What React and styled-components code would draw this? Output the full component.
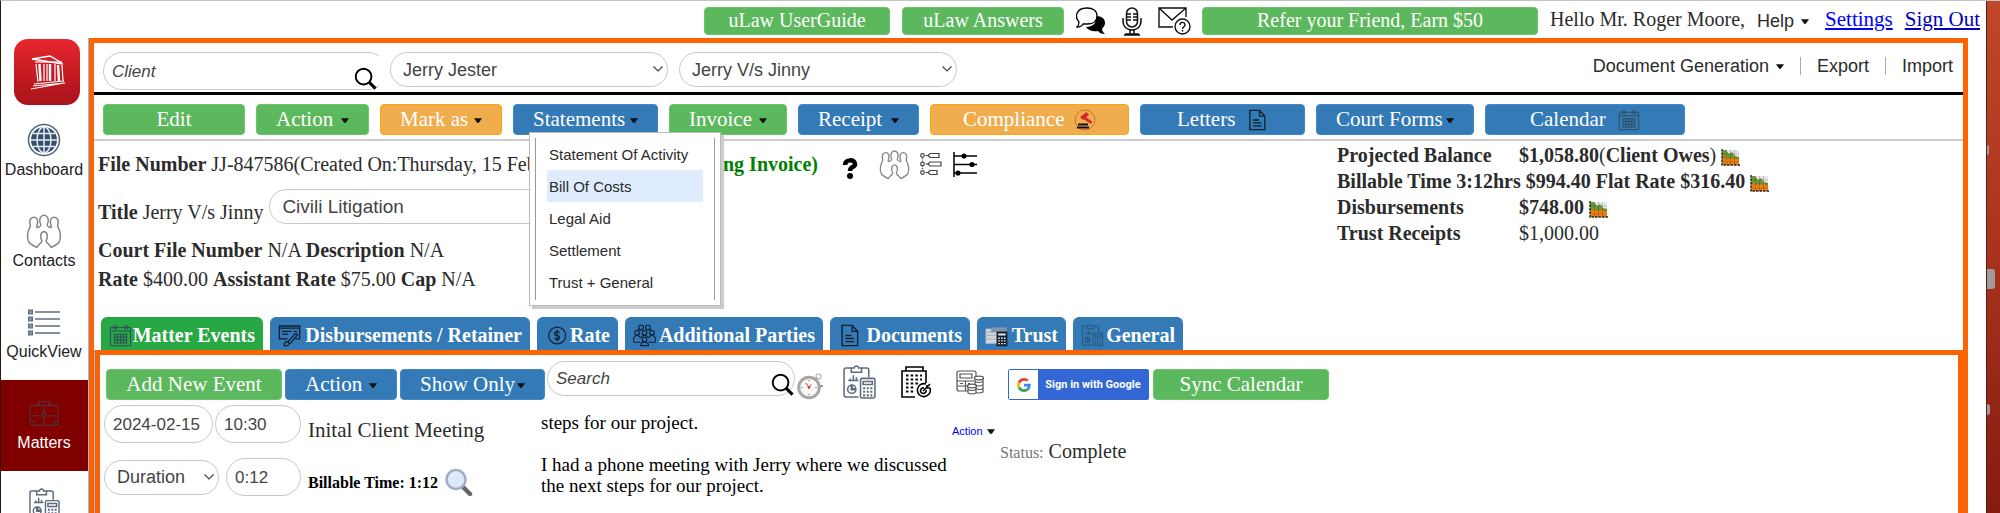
import React from 'react';
import styled, { createGlobalStyle, css } from 'styled-components';

const serif = "'Liberation Serif', 'Times New Roman', serif";
const sans = "'Liberation Sans', Arial, sans-serif";
const orange = '#ff6200';

const tones = {
    green: { bg: '#5cb85c', edge: '#6cc56c' },
    blue: { bg: '#337ab7', edge: '#4189c9' },
    amber: { bg: '#f0ad4e', edge: '#ffa50c' },
};

const sideItems = [
    { id: 'dashboard', label: 'Dashboard', icon: 'globe', size: 34 },
    { id: 'contacts', label: 'Contacts', icon: 'people', size: 36 },
    { id: 'quickview', label: 'QuickView', icon: 'list', size: 34 },
    { id: 'matters', label: 'Matters', icon: 'briefcase', size: 32, active: true },
    { id: 'accounts', icon: 'report', size: 33 },
];

const tabs = [
    { label: 'Matter Events', icon: 'calendar', width: 162, active: true },
    { label: 'Disbursements / Retainer', icon: 'cheque', width: 260 },
    { label: 'Rate', icon: 'dollar', width: 81 },
    { label: 'Additional Parties', icon: 'crowd', width: 198 },
    { label: 'Documents', icon: 'document', width: 140 },
    { label: 'Trust', icon: 'trust', width: 89 },
    { label: 'General', icon: 'reportDark', width: 110 },
];

const statements = ['Statement Of Activity', 'Bill Of Costs', 'Legal Aid', 'Settlement', 'Trust + General'];


export default function App() {
  return (
    <>
      <GlobalStyle />
      <Page>
        <Sidebar>
            <Logo href="#home" aria-label="uLaw home"><TempleIcon /></Logo>
            {sideItems.map((item) => (
                <SideLink href={`#${item.id}`} aria-label={item.id} key={item.id} $active={item.active}>
                    <SideIcon><Icon name={item.icon} size={item.size} /></SideIcon>
                    {item.label}
                </SideLink>
            ))}
        </Sidebar>

        <Main>
            <TopBar>
                <Button $tone="green" $w={186} $small>uLaw UserGuide</Button>
                <Button $tone="green" $w={162} $small>uLaw Answers</Button>
                <IconButton aria-label="Chat" $w={30}><ChatIcon /></IconButton>
                <IconButton aria-label="Dictate" $w={28}><MicIcon /></IconButton>
                <IconButton aria-label="Mail support" $w={32}><MailIcon /></IconButton>
                <Button $tone="green" $w={336} $small>Refer your Friend, Earn $50</Button>
                <Greeting>Hello Mr. Roger Moore,</Greeting>
                <HelpButton>Help <Caret /></HelpButton>
                <AccountLink href="#settings">Settings</AccountLink>
                <AccountLink href="#signout" $dark>Sign Out</AccountLink>
            </TopBar>

            <Matter>
                <MatterHeader>
                    <ClientField>
                        <SearchInput aria-label="Client" placeholder="Client" />
                        <FieldIcon $right={2}><SearchIcon /></FieldIcon>
                    </ClientField>
                    <Picker label="Client name" width={278}>Jerry Jester</Picker>
                    <Picker label="Matter" width={278}>Jerry V/s Jinny</Picker>
                    <HeaderNav>
                        <NavButton>Document Generation <Caret /></NavButton>
                        <NavLink href="#export">Export</NavLink>
                        <NavLink href="#import">Import</NavLink>
                    </HeaderNav>
                </MatterHeader>

                <ActionBar>
                    <Button $tone="green" $w={142}>Edit</Button>
                    <Button $tone="green" $w={113} $spread>Action <Caret /></Button>
                    <Button $tone="amber" $w={122} $spread>Mark as <Caret /></Button>
                    <MenuHolder>
                        <Button $tone="blue" $w={145} $spread aria-expanded="true">Statements <Caret /></Button>
                        <Menu>
                            <MenuList>
                                {statements.map((name, index) => (
                                    <li key={name}><MenuItem $on={index === 1}>{name}</MenuItem></li>
                                ))}
                            </MenuList>
                        </Menu>
                    </MenuHolder>
                    <Button $tone="green" $w={118} $spread>Invoice <Caret /></Button>
                    <Button $tone="blue" $w={121} $spread>Receipt <Caret /></Button>
                    <Button $tone="amber" $w={199} $spread $pad={32}>Compliance <GavelIcon /></Button>
                    <Button $tone="blue" $w={165} $spread $pad={36}>Letters <Icon name="document" size={22} /></Button>
                    <Button $tone="blue" $w={158} $spread>Court Forms <Caret /></Button>
                    <Button $tone="blue" $w={200} $spread $pad={44}>Calendar <Icon name="calendar" size={22} /></Button>
                </ActionBar>

                <Info>
                    <Details>
                        <DetailRow>
                            <FileLine>
                                <span><b>File Number</b> JJ-847586(Created On:Thursday, 15 Feb)</span>
                                <Pending>(Pending Invoice)</Pending>
                            </FileLine>
                            <InfoIcons>
                                <IconButton aria-label="Help" $w={16}><QuestionIcon /></IconButton>
                                <IconButton aria-label="Contacts" $w={30}><Icon name="people" size={31} /></IconButton>
                                <IconButton aria-label="Fields" $w={22}><FieldsIcon /></IconButton>
                                <IconButton aria-label="Timeline" $w={24}><SlidersIcon /></IconButton>
                            </InfoIcons>
                        </DetailRow>
                        <TitleRow>
                            <label htmlFor="title"><b>Title</b> Jerry V/s Jinny</label>
                            <TitleInput id="title" defaultValue="Civili Litigation" />
                        </TitleRow>
                        <DetailText><b>Court File Number</b> N/A <b>Description</b> N/A</DetailText>
                        <DetailText><b>Rate</b> $400.00 <b>Assistant Rate</b> $75.00 <b>Cap</b> N/A</DetailText>
                    </Details>

                    <Summary>
                        <SummaryRow><SummaryName>Projected Balance</SummaryName><b>$1,058.80</b>(<b>Client Owes</b>) <ChartIcon /></SummaryRow>
                        <SummaryRow><b>Billable Time 3:12hrs $994.40 Flat Rate $316.40</b> <ChartIcon /></SummaryRow>
                        <SummaryRow><SummaryName>Disbursements</SummaryName><b>$748.00</b> <ChartIcon /></SummaryRow>
                        <SummaryRow><SummaryName>Trust Receipts</SummaryName>$1,000.00</SummaryRow>
                    </Summary>
                </Info>

                <Tabs role="tablist">
                    {tabs.map((tab) => (
                        <Tab role="tab" aria-selected={!!tab.active} key={tab.label} $w={tab.width} $active={tab.active}>
                            <Icon name={tab.icon} size={23} />
                            {tab.label}
                        </Tab>
                    ))}
                </Tabs>

                <Events>
                    <EventBar>
                        <ButtonGroup>
                            <Button $tone="green" $w={176}>Add New Event</Button>
                            <Button $tone="blue" $w={112} $spread>Action <Caret /></Button>
                            <Button $tone="blue" $w={145} $spread>Show Only <Caret /></Button>
                        </ButtonGroup>
                        <EventSearch>
                            <SearchInput aria-label="Search" placeholder="Search" $low />
                            <FieldIcon $right={1}><SearchIcon /></FieldIcon>
                        </EventSearch>
                        <IconButton aria-label="Timer" $w={27}><StopwatchIcon /></IconButton>
                        <EventIcons>
                            <IconButton aria-label="Report" $w={33}><Icon name="report" size={35} /></IconButton>
                            <IconButton aria-label="Firm goals" $w={30}><BuildingIcon /></IconButton>
                            <IconButton aria-label="Accounting" $w={28}><CoinsIcon /></IconButton>
                        </EventIcons>
                        <GoogleButton>
                            <GoogleMark><GoogleIcon /></GoogleMark>
                            <GoogleText>Sign in with Google</GoogleText>
                        </GoogleButton>
                        <Button $tone="green" $w={176}>Sync Calendar</Button>
                    </EventBar>

                    <EventRow>
                        <EventFields>
                            <FieldRow>
                                <FieldPair $gap={2}>
                                    <SmallInput aria-label="Date" defaultValue="2024-02-15" $w={109} />
                                    <SmallInput aria-label="Time" defaultValue="10:30" $w={86} />
                                </FieldPair>
                                <EventTitle>Inital Client Meeting</EventTitle>
                            </FieldRow>
                            <FieldRow>
                                <FieldPair $gap={7}>
                                    <Picker label="Time type" width={115}>Duration</Picker>
                                    <SmallInput aria-label="Duration" defaultValue="0:12" $w={75} />
                                </FieldPair>
                                <Billable>Billable Time: 1:12</Billable>
                                <IconButton aria-label="View entry" $w={28}><LensIcon /></IconButton>
                            </FieldRow>
                        </EventFields>
                        <Note>
                            <p>steps for our project.</p>
                            <p>I had a phone meeting with Jerry where we discussed<br />the next steps for our project.</p>
                        </Note>
                        <RowAction>Action <Caret /></RowAction>
                        <Status><small>Status:</small> Complete</Status>
                    </EventRow>
                </Events>
            </Matter>
        </Main>

        <Desktop>
            <Sliver $top={144} $w={2} $h={10} />
            <Sliver $top={268} $w={8} $h={20} />
            <Sliver $top={403} $w={3} $h={11} />
        </Desktop>
      </Page>
    </>
  )
}

const Picker = ({ label, width, children }) => (
    <PickerWrap $w={width}>
        <Select aria-label={label}><option>{children}</option></Select>
        <FieldIcon $right={5} $middle>
            <svg width="10" height="6" viewBox="0 0 10 6"><path d="M.5 .5 5 5 9.500 .5" fill="none" stroke="#444" strokeWidth="1.200" /></svg>
        </FieldIcon>
    </PickerWrap>
)

const Caret = () => (
    <svg width="8" height="5" viewBox="0 0 8 5" aria-hidden="true"><path d="M0 .3h8L5 4.500q-1 .8-2 0z" fill="#111" /></svg>
)


/* ---------- icons ---------- */

// left half of the outer pair, mirrored for the right one
const SIDE_PERSON = 'M9.500 13c-1-1 0-2 0-3C11 5 8.500 3 6.500 3S1.500 5 3 10c.5 2-.5 3-1.500 5-1.500 5-1.500 9 .5 12 2 2 4 3 7 4.500l3-3.500c1.500-1 2-1 2-3-1.500-2-2-8 2-8.500';

const shapes = {
    globe: (
        <g fill="none" stroke="#51667c">
            <circle cx="16" cy="16" r="13" fill="#34506b" stroke="none" />
            <circle cx="16" cy="16" r="15.500" strokeWidth="1.500" />
            <g stroke="#e4eaf0" strokeWidth="1.500">
                <path d="M16 3v26M3 16h26M5 9.500h22M5 22.500h22" />
                <ellipse cx="16" cy="16" rx="7" ry="13" />
            </g>
        </g>
    ),
    people: (
        <g fill="none" stroke="#858585" strokeWidth="1.400" strokeLinejoin="round">
            <path d="M9.500 13c2-1 3.500-1 3.500-3-1.500-2-2-8 3-9 5 1 4.500 7 3 9 0 2 1.500 2 3.500 3" />
            <path d={SIDE_PERSON} />
            <path d={SIDE_PERSON} transform="translate(32 0) scale(-1 1)" />
        </g>
    ),
    list: (
        <g stroke="#8391a2" strokeWidth="2">
            <path d="M7 6h25M7 13h25M7 20h25M7 27h25" />
            <g fill="#8391a2" stroke="#5b6b7e" strokeWidth="1">
                <rect x=".5" y="4" width="4" height="4" /><rect x=".5" y="11" width="4" height="4" />
                <rect x=".5" y="18" width="4" height="4" /><rect x=".5" y="25" width="4" height="4" />
            </g>
        </g>
    ),
    briefcase: (
        <g fill="none" stroke="#5a2830" strokeWidth="1.400">
            <rect x="1" y="8" width="30" height="21" rx="2" />
            <path d="M11 8V4h10v4M9 8V6h2M23 8V6h-2M2 19h12M18 19h12M16 8v6M16 21v8M1 24q5 0 5 5M31 24q-5 0-5 5" />
            <rect x="14.500" y="14" width="3" height="7" rx="1.500" />
        </g>
    ),
};

const reportShape = (color) => (
    <g fill="none" stroke={color} strokeWidth="1.500">
        <path d="M15 30H3q-2 0-2-2V4q0-2 2-2h5M18 2h5q2 0 2 2v7" />
        <path d="M8 2h3q0-2 2-2t2 2h3v4H8zM5 14h10M7 14v-2M10 14V9M13 14v-3" />
        <circle cx="8.500" cy="22.500" r="4" /><path d="M8.500 18.500v4h4" strokeWidth="2.500" />
        <rect x="17" y="12" width="14" height="19" rx="1.500" />
        <path d="M19.500 15h9v3h-9z" />
        <path d="M19.500 21.500h9M19.500 25h9M19.500 28.500h9" strokeWidth="2" strokeDasharray="2 1.500" />
    </g>
);

shapes.report = reportShape('#5c6d80');
shapes.reportDark = reportShape('#28567e');

shapes.calendar = (
    <g fill="none" stroke="#2d4d5c" strokeWidth="1.500">
        <rect x="1" y="4" width="30" height="27" rx="1.500" />
        <path d="M1 9.500h30M7 14h18v13H7zM7 18.300h18M7 22.600h18M11.500 14v13M16 14v13M20.500 14v13" />
        <circle cx="8" cy="4" r="2.500" /><circle cx="24" cy="4" r="2.500" />
    </g>
);
shapes.document = (
    <g fill="none" stroke="#10202e" strokeWidth="2">
        <path d="M5 1h15l8 9v21H5zM20 1v9h8M10 16h9M10 20.500h13M10 25h13" />
    </g>
);
shapes.cheque = (
    <g fill="none" stroke="#10202e" strokeWidth="2">
        <path d="M13 21H1V2h30v19h-6M1 5h30" /><path d="M5 10h14M5 14h9M22 10h5" />
        <path d="M8 31q0-6 5-6 3 1 2 4-2 3-7 2M14 25l10-11q3-2 4 1L17 28" />
    </g>
);
shapes.dollar = (
    <g fill="none" stroke="#10202e" strokeWidth="1.800">
        <circle cx="17" cy="16" r="12.500" />
        <path d="M20.500 12.500q-1-2.500-3.500-2.500-3.500 0-3.500 3t3.500 3 3.500 3-3.500 3q-3 0-3.500-2.500M17 7.500v17" />
    </g>
);
shapes.crowd = (
    <g fill="none" stroke="#10202e" strokeWidth="1.600">
        <circle cx="11" cy="4" r="3.500" /><circle cx="21" cy="4" r="3.500" />
        <circle cx="5" cy="12" r="3.500" /><circle cx="16" cy="12" r="3.500" /><circle cx="27" cy="12" r="3.500" />
        <circle cx="16" cy="22" r="3.500" />
        <path d="M0 26v-6q1-4 5-4t5 4M0 26h10M32 26v-6q-1-4-5-4t-5 4M22 26h10M10 31q0-5 6-5t6 5zM11 19q1-3 5-3t5 3M6 8q2-2 5 0M21 8q3-2 5 0" />
    </g>
);
shapes.trust = (
    <g>
        <path d="M0 6h21v22H0z" fill="#cfd3da" /><path d="M0 11h16M0 16h16M0 21h16" stroke="#aab2c0" strokeWidth="1.500" />
        <path d="M8 4h23v7H8z" fill="#8294ab" />
        <rect x="16" y="10" width="16" height="22" rx="1" fill="#15202c" />
        <path d="M18.500 13h11v3h-11z" fill="#dfe5ec" />
        <path d="M18.500 20h11M18.500 24h11M18.500 28h11" stroke="#dfe5ec" strokeWidth="2" strokeDasharray="2.500 1.700" />
    </g>
);

const Icon = ({ name, size = 32 }) => (
    <svg width={size} height={size} viewBox="-1 -1 34 34" aria-hidden="true">{shapes[name]}</svg>
)

const TempleIcon = () => (
    <svg width="66" height="66" viewBox="0 0 66 66" fill="none" stroke="#fff">
        <path d="M18 20l18-3 12 7M18 20l31 5" strokeWidth="1.300" />
        <path d="M21 23h27" strokeWidth="1.200" />
        <path d="M25.500 25l1 17M36 25v17M44 26l1 16" strokeWidth="2.400" />
        <path d="M22 25l2 18M30 25v17M33 25v17M41 25v17M48 26l1 16" strokeWidth="1.200" />
        <path d="M20 45l30-3M19 47l32-3M17 50l33-6" strokeWidth="1.200" />
    </svg>
)

const ChatIcon = () => (
    <svg width="30" height="28" viewBox="0 0 30 28">
        <path d="M20 9c6 0 9 3 9 7 0 3-2 4-3 6 0 2 1 3 3 5-3 0-6-1-7-3-6 1-10-1-12-4 7 0 11-4 10-11z" fill="#000" />
        <path d="M11 1c6 0 10 3 10 8s-4 8-10 8h-4c-1 2-4 3-6 3 2-2 2-3 2-5C0 12 0 10 .8 7 2 3 6 1 11 1z" fill="#fff" stroke="#000" strokeWidth="1.300" />
    </svg>
)

const MicIcon = () => (
    <svg width="20" height="29" viewBox="0 0 20 29" fill="none" stroke="#111" strokeWidth="1.500">
        <rect x="4.500" y="1" width="11" height="19" rx="5.500" />
        <path d="M1 11v3c0 12 18 12 18 0v-3M8 23v4M12 23v4M2 28h16M3 27h14M5 7h4M5 10h4M5 13h4M11 7h4M11 10h4M11 13h4" />
    </svg>
)

const MailIcon = () => (
    <svg width="33" height="28" viewBox="0 0 33 28" fill="none" stroke="#111" strokeWidth="1.400">
        <path d="M15 20H1V1h27v9M1 1l13 12L28 1" />
        <circle cx="24.500" cy="19.500" r="7.500" fill="#fff" />
        <path d="M22 18c0-4 5-3 5 0 0 2-2.500 1.500-2.500 4M24.500 23v1.500" />
    </svg>
)

const SearchIcon = () => (
    <svg width="23" height="23" viewBox="0 0 24 24" fill="none" stroke="#000">
        <circle cx="10" cy="10" r="8.200" strokeWidth="2" /><path d="M16 16l6.500 6.500" strokeWidth="3.200" />
    </svg>
)

const QuestionIcon = () => (
    <svg width="16" height="21" viewBox="0 0 16 21">
        <path d="M3 7c0-6 10-6 10-1 0 4-5 2-5 7" fill="none" stroke="#000" strokeWidth="4.500" /><circle cx="8" cy="18" r="3" />
    </svg>
)

const FieldsIcon = () => (
    <svg width="22" height="24" viewBox="0 0 22 24" fill="none" stroke="#444" strokeWidth="1.200">
        <circle cx="2.500" cy="3.500" r="1.800" /><circle cx="2.500" cy="12" r="1.800" /><circle cx="2.500" cy="20.500" r="1.800" />
        <path d="M2.500 5.500v4.500M2.500 14v4.500" strokeDasharray="1 1" />
        <path d="M5.500 3.500H8l2-2h9v4h-9L8 3.500M5.500 12H8l2-2h11v4H10L8 12M5.500 20.500H8l2-2h7v4h-7l-2-2" />
    </svg>
)

const SlidersIcon = () => (
    <svg width="24" height="25" viewBox="0 0 24 25" stroke="#000" strokeWidth="1.500">
        <path d="M1 0v25M1 4h23M1 12.500h23M1 21h23" fill="none" />
        <circle cx="11" cy="4" r="1.800" /><circle cx="19" cy="12.500" r="1.800" /><circle cx="5" cy="21" r="1.800" />
    </svg>
)

const GavelIcon = () => (
    <svg width="22" height="22" viewBox="0 0 22 22">
        <circle cx="11" cy="11" r="10" fill="none" stroke="#d0703c" />
        <path d="M6.500 8l6-4.500 2 2.500-6 4.500zM11 8l7 5-1 1.500-8-5z" fill="#d2232a" stroke="#d2232a" strokeWidth=".6" />
        <path d="M4 15.500h10M3 18.500h12" stroke="#111" strokeWidth="1.800" />
    </svg>
)

const ChartIcon = () => (
    <svg width="19" height="17" viewBox="0 0 19 17" aria-hidden="true">
        <path d="M1 1h17v15H1z" fill="#e6e6ef" />
        <path d="M1 1h4l3 4 3-2 3 4 4 1v8H1z" fill="#6b9a34" />
        <path d="M1 9l4-1 4 2 4-2 5 3v5H1z" fill="#f08010" />
        <path d="M5.500 1v15M9.500 1v15M13.500 1v15M1 5h17M1 9h17M1 13h17" stroke="#333" strokeOpacity=".3" strokeWidth=".8" />
        <path d="M1 0v16h18" fill="none" stroke="#222" strokeWidth="1.400" strokeDasharray="2.500 1" />
    </svg>
)

const StopwatchIcon = () => (
    <svg width="27" height="27" viewBox="0 0 27 27">
        <circle cx="21.500" cy="3.500" r="2.500" fill="none" stroke="#c4c4c4" strokeWidth="1.500" />
        <path d="M18 7l2-2M23 13h3" stroke="#999" strokeWidth="2" />
        <circle cx="12" cy="14.500" r="10.300" fill="#f7f7f5" stroke="#a9a5a2" strokeWidth="3" />
        <path d="M12 7v1M12 21v1M4.500 14.500h1M18.500 14.500h1" stroke="#555" />
        <path d="M9 10l3 4.500 2-3" fill="none" stroke="#c33" strokeWidth="1" /><circle cx="12" cy="14.500" r="1.300" fill="#c33" />
    </svg>
)

const BuildingIcon = () => (
    <svg width="30" height="33" viewBox="0 0 30 33" fill="none" stroke="#000" strokeWidth="1.600">
        <path d="M14 31H1V5h24v12M5 5V1h17v4" />
        <path d="M5 9.500h16M5 13.500h16M5 17.500h14M5 21.500h9M5 25.500h8" strokeWidth="2" strokeDasharray="2.500 2.200" />
        <path d="M29 22a6.500 6.500 0 1 1-4-4M25 24a2.800 2.800 0 1 1-2-2M22 25l7-7M26 19v3h3" />
    </svg>
)

const CoinsIcon = () => (
    <svg width="28" height="26" viewBox="0 0 28 26" fill="none" stroke="#555" strokeWidth="1.200">
        <path d="M12 21H3q-2 0-2-2V3q0-2 2-2h15q2 0 2 2v3M4 4h12v4H4zM1 11h17M1 16h12M9.500 11v10M4 13.500h3M12 13.500h2" />
        <g fill="#fff">
            <path d="M19 8v14q4 2 8 0V8" /><path d="M12 16v7q4 2 8 0v-7" />
            <ellipse cx="23" cy="8" rx="4.500" ry="1.800" /><ellipse cx="16" cy="16" rx="4.500" ry="1.800" />
        </g>
        <path d="M19 11.500q4 2 8 0M19 15q4 2 8 0M20 18.500q4 2 7 0M12 19.500q4 2 8 0" />
    </svg>
)

const LensIcon = () => (
    <svg width="28" height="28" viewBox="0 0 28 28">
        <path d="M18 19l7 7" stroke="#666" strokeWidth="4.500" strokeLinecap="round" />
        <circle cx="11" cy="11.500" r="9.500" fill="#dce9fb" stroke="#a3adc4" strokeWidth="2.500" />
        <path d="M4 11q2-7 11-6-8 1-11 6z" fill="#fff" />
    </svg>
)

const GoogleIcon = () => (
    <svg width="14" height="14" viewBox="0 0 48 48">
        <path fill="#EA4335" d="M24 9.500c3.540 0 6.710 1.220 9.210 3.600l6.850-6.850C35.900 2.380 30.470 0 24 0 14.620 0 6.510 5.380 2.560 13.220l7.980 6.190C12.430 13.720 17.740 9.500 24 9.500z" />
        <path fill="#4285F4" d="M46.980 24.550c0-1.570-.150-3.090-.380-4.550H24v9.020h12.940c-.580 2.960-2.260 5.480-4.780 7.180l7.730 6c4.510-4.180 7.090-10.360 7.090-17.650z" />
        <path fill="#FBBC05" d="M10.530 28.590c-.480-1.450-.760-2.990-.760-4.590s.270-3.140.760-4.590l-7.980-6.190C.920 16.460 0 20.120 0 24c0 3.880.920 7.540 2.560 10.780l7.970-6.190z" />
        <path fill="#34A853" d="M24 48c6.480 0 11.930-2.130 15.890-5.810l-7.730-6c-2.150 1.450-4.920 2.300-8.160 2.300-6.260 0-11.570-4.220-13.470-9.910l-7.980 6.190C6.510 42.620 14.620 48 24 48z" />
    </svg>
)


/* ---------- layout ---------- */

const GlobalStyle = createGlobalStyle`
    *, *::before, *::after{
        box-sizing: border-box;
    }

    body{
        margin: 0;
        color: #2b2b2b;
        font-family: ${serif};
        font-size: 20px;
    }

    button, input, select{
        font: inherit;
        color: inherit;
    }

    svg{
        display: block;
        flex: none;
    }

    p{
        margin: 0;
    }
`

const Page = styled.div`
    display: flex;
    height: 100vh;
    overflow: hidden;
    border-top: 1px solid #c4c4c4;
    border-left: 1px solid #2c1708;
    background: #fff;
`

const Sidebar = styled.nav`
    flex: none;
    width: 88px;
    padding-top: 38px;
    font-family: ${sans};
    font-size: 16px;
`

const Logo = styled.a`
    display: block;
    width: 66px;
    margin: 0 auto 2px 13px;
    border-radius: 14px;
    background: linear-gradient(#e8272f, #c41a22 55%, #a9141b);
`

const SideLink = styled.a`
    display: flex;
    flex-direction: column;
    align-items: center;
    gap: 3px;
    height: 91px;
    padding-top: 15px;
    padding-right: 2px;
    line-height: 18px;
    text-decoration: none;
    color: ${props => props.$active ? '#fff' : '#222'};
    background: ${props => props.$active ? '#800000' : 'none'};
`

const SideIcon = styled.span`
    display: grid;
    place-items: center;
    height: 36px;
`

const Main = styled.main`
    flex: 1;
    min-width: 0;
    display: flex;
    flex-direction: column;
    padding-right: 18px;
`

const TopBar = styled.header`
    display: flex;
    align-items: center;
    justify-content: flex-end;
    gap: 12px;
    height: 37px;
    padding-top: 3px;
    margin-right: -12px;
    white-space: nowrap;
`

const Button = styled.button`
    flex: none;
    display: flex;
    align-items: center;
    justify-content: ${props => props.$spread ? 'space-between' : 'center'};
    min-width: ${props => props.$w}px;
    height: ${props => props.$small ? 28 : 31}px;
    padding: 0 ${props => props.$spread ? props.$pad || 19 : 8}px 2px;
    border: 1px solid ${props => tones[props.$tone].edge};
    border-radius: 4px;
    background: ${props => tones[props.$tone].bg};
    color: #fff;
    font-size: ${props => props.$small ? 20 : 21}px;
    line-height: 24px;
    white-space: nowrap;
    cursor: pointer;

    svg{
        margin-top: 3px;
    }
`

const IconButton = styled.button`
    flex: none;
    display: flex;
    justify-content: center;
    width: ${props => props.$w}px;
    padding: 0;
    border: 0;
    background: none;
    cursor: pointer;
`

const Greeting = styled.span`
    padding-bottom: 4px;
`

const plainButton = css`
    display: flex;
    align-items: center;
    padding: 0;
    border: 0;
    background: none;
    font-family: ${sans};
    cursor: pointer;
`

const HelpButton = styled.button`
    ${plainButton}
    gap: 7px;
    margin-right: 4px;
    font-size: 18px;
`

const AccountLink = styled.a`
    padding-bottom: 4px;
    color: ${props => props.$dark ? '#0000b8' : '#0000ff'};
    font-size: 21px;
`

const Matter = styled.section`
    flex: 1;
    display: flex;
    flex-direction: column;
    border: 5px solid ${orange};
    border-bottom: 0;
    box-shadow: -1px 0 0 #8fbcf5;
`

const MatterHeader = styled.div`
    display: flex;
    align-items: flex-start;
    gap: 11px;
    height: 52px;
    padding: 9px 10px 0 9px;
    border-bottom: 3px solid #000;
`

const ClientField = styled.div`
    position: relative;
    width: 276px;
    overflow: hidden;
`

const roundField = css`
    border: 1px solid #c8c8c8;
    border-radius: 19px;
    background: #fff;
    color: #444;
    font-family: ${sans};
    outline: 0;
`

const SearchInput = styled.input`
    ${roundField}
    display: block;
    width: ${props => props.$low ? '100%' : 'calc(100% + 8px)'};
    height: ${props => props.$low ? 35 : 38}px;
    padding: 1px 40px 0 8px;
    font-size: 17px;
    font-style: italic;

    &::placeholder{
        color: #444;
    }
`

const FieldIcon = styled.span`
    position: absolute;
    right: ${props => props.$right}px;
    bottom: ${props => props.$middle ? '15px' : '0'};
    pointer-events: none;
`

const PickerWrap = styled.div`
    position: relative;
    flex: none;
    width: ${props => props.$w}px;
`

const Select = styled.select`
    ${roundField}
    display: block;
    appearance: none;
    width: 100%;
    height: 35px;
    padding: 0 20px 0 12px;
    font-size: 18px;
`

const HeaderNav = styled.nav`
    display: flex;
    align-items: center;
    margin-left: auto;
    height: 28px;
    font-family: ${sans};
    font-size: 18px;
`

const NavButton = styled.button`
    ${plainButton}
    gap: 7px;
`

const NavLink = styled.a`
    margin-left: 16px;
    padding-left: 16px;
    border-left: 1px solid #aaa;
    line-height: 18px;
    color: inherit;
    text-decoration: none;
`

const ActionBar = styled.div`
    display: flex;
    gap: 11px;
    padding: 9px 9px 4px;
    border-bottom: 2px solid #ccc;
`

const MenuHolder = styled.div`
    position: relative;
`

const Menu = styled.div`
    position: absolute;
    z-index: 5;
    top: 28px;
    left: 16px;
    width: 192px;
    padding: 5px;
    border: 1px solid #bbb;
    background: #fff;
    box-shadow: 3px 3px 0 #ccc;
`

const MenuList = styled.ul`
    margin: 0;
    padding: 0 11px 2px;
    border: solid #999;
    border-width: 0 1px;
    list-style: none;
`

const MenuItem = styled.button`
    ${plainButton}
    width: 100%;
    height: 32px;
    padding: 0 2px;
    background: ${props => props.$on ? '#dfecfd' : 'none'};
    font-size: 15px;
    white-space: nowrap;
`

const Info = styled.div`
    display: grid;
    grid-template-columns: 1fr 626px;
    white-space: nowrap;
`

const Details = styled.div`
    padding: 7px 4px 23px;
`

const DetailRow = styled.div`
    display: flex;
    align-items: center;
    gap: 24px;
    height: 32px;
`

const FileLine = styled.div`
    display: flex;
    justify-content: space-between;
    flex: none;
    width: 720px;
`

const Pending = styled.b`
    color: #008000;
`

const InfoIcons = styled.div`
    display: flex;
    align-items: center;
    gap: 11px;

    > :first-child{
        margin-right: 10px;
        padding-top: 8px;
    }
`

const TitleRow = styled.div`
    display: flex;
    align-items: flex-end;
    gap: 6px;
    margin: 9px 0 12px;
    line-height: 24px;
`

const TitleInput = styled.input`
    ${roundField}
    width: 400px;
    height: 35px;
    padding: 0 12px;
    font-size: 19px;
`

const DetailText = styled.p`
    line-height: 29px;
`

const Summary = styled.div`
    padding-top: 1px;
`

const SummaryRow = styled.div`
    line-height: 26px;

    svg{
        display: inline-block;
        vertical-align: -4px;
    }
`

const SummaryName = styled.b`
    display: inline-block;
    min-width: 182px;
`

const Tabs = styled.div`
    display: flex;
    gap: 7px;
    padding-left: 7px;
`

const Tab = styled.button`
    display: flex;
    align-items: center;
    justify-content: space-between;
    min-width: ${props => props.$w}px;
    height: 33px;
    padding: 3px 8px 0;
    border: 0;
    border-radius: 6px 6px 0 0;
    background: ${props => props.$active ? '#28a745' : '#337ab7'};
    color: #fff;
    font-weight: bold;
    white-space: nowrap;
    cursor: pointer;
`

const Events = styled.div`
    flex: 1;
    margin-left: 1px;
    padding: 6px 4px;
    border: 5px solid ${orange};
    border-bottom: 0;
    box-shadow: -1px 0 0 #8fbcf5;
`

const EventBar = styled.div`
    display: flex;
    align-items: flex-end;
    height: 39px;
    padding-left: 2px;
`

const ButtonGroup = styled.div`
    display: flex;
    gap: 3px;
`

const EventSearch = styled.div`
    position: relative;
    align-self: flex-start;
    width: 248px;
    margin: 0 2px;
`

const EventIcons = styled.div`
    display: flex;
    align-items: center;
    gap: 25px;
    margin: 0 24px 0 19px;
`

const GoogleButton = styled.button`
    display: flex;
    height: 31px;
    margin-right: 4px;
    padding: 0;
    border: 1px solid #3367d6;
    border-radius: 2px;
    background: #3367d6;
    color: #fff;
    cursor: pointer;
`

const GoogleMark = styled.span`
    display: grid;
    place-items: center;
    width: 29px;
    height: 100%;
    background: #fff;
`

const GoogleText = styled.span`
    width: 110px;
    font: bold 11px/29px Roboto, ${sans};
`

const EventRow = styled.div`
    display: grid;
    grid-template-columns: 437px 411px 48px 1fr;
    padding-top: 5px;
`

const EventFields = styled.div`
    display: flex;
    flex-direction: column;
    gap: 15px;
`

const FieldRow = styled.div`
    display: flex;
    align-items: flex-end;
    gap: 7px;
`

const FieldPair = styled.div`
    display: flex;
    align-items: center;
    gap: ${props => props.$gap}px;
`

const SmallInput = styled.input`
    ${roundField}
    width: ${props => props.$w}px;
    height: 38px;
    padding: 1px 8px 0;
    font-size: 17px;
`

const EventTitle = styled.span`
    font-size: 21px;
    line-height: 26px;
`

const Billable = styled.b`
    color: #000;
    font-size: 16px;
    line-height: 26px;
`

const Note = styled.div`
    height: 91px;
    padding-top: 7px;
    overflow: hidden;
    color: #000;
    font-size: 19px;
    line-height: 21px;
    white-space: nowrap;

    p + p{
        margin-top: 21px;
    }
`

const RowAction = styled.button`
    ${plainButton}
    align-self: start;
    gap: 4px;
    margin-top: 20px;
    color: #0000ee;
    font-size: 11px;
`

const Status = styled.p`
    padding-top: 34px;
    line-height: 24px;

    small{
        color: #777;
        font-size: 16px;
    }
`

const Desktop = styled.aside`
    position: relative;
    flex: none;
    width: 14px;
    border-left: 1px solid #5e1a10;
    background: linear-gradient(#c04728, #a8321d 50%, #841c10);
`

const Sliver = styled.span`
    position: absolute;
    left: 0;
    top: ${props => props.$top}px;
    width: ${props => props.$w}px;
    height: ${props => props.$h}px;
    border-radius: 0 3px 3px 0;
    background: #a09c9c;
`
